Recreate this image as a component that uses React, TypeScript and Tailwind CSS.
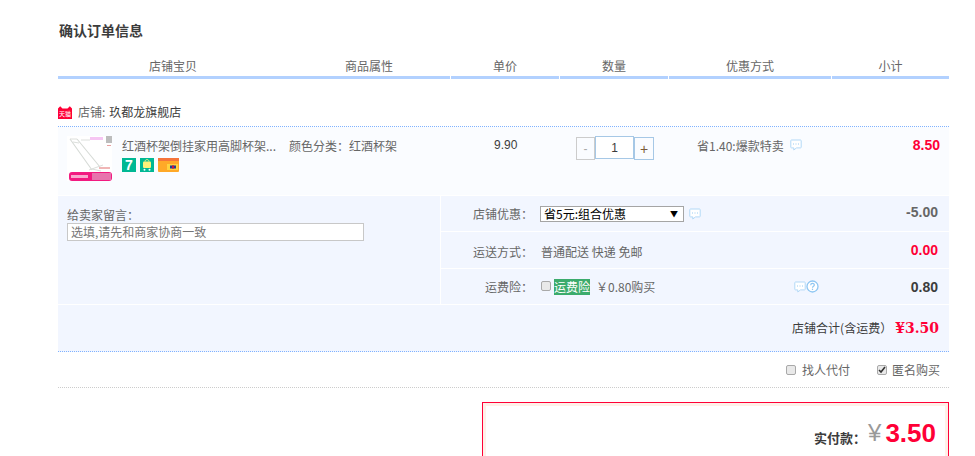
import React from "react";

const Bubble = () => (
  <svg width="12" height="12" viewBox="0 0 12 12" className="shrink-0">
    <path d="M1.500 1h9a.7.7 0 0 1 .7.7v6.500a.7.7 0 0 1-.7.7H6.500L3.800 11V8.900H1.500a.7.7 0 0 1-.7-.7V1.700a.7.7 0 0 1 .7-.7z" fill="#fff" stroke="#b3d9f7" strokeWidth="1" />
    <path d="M3 5h1M5.500 5h1M8 5h1" stroke="#9accf2" strokeWidth="1" />
  </svg>
);

const Help = () => (
  <svg width="13" height="13" viewBox="0 0 13 13" className="shrink-0">
    <circle cx="6.500" cy="6.500" r="5.500" fill="#fff" stroke="#8ec6f2" strokeWidth="1.300" />
    <path d="M4.700 5.200c0-2.300 3.600-2.300 3.600-.2 0 1.300-1.800 1.400-1.800 2.800" fill="none" stroke="#8ec6f2" strokeWidth="1.200" />
    <rect x="5.900" y="8.700" width="1.200" height="1.300" fill="#8ec6f2" />
  </svg>
);

const Tmall = () => (
  <svg width="14" height="13" viewBox="0 0 14 13">
    <path d="M0 2.500 2.200 0.200 4.500 2.500h5L11.800 0.200 14 2.500V13H0z" fill="#ff0036" />
    <text x="7" y="9.800" textAnchor="middle" fontSize="6" fill="#fff" fontFamily="'Noto Sans CJK SC', sans-serif">天猫</text>
  </svg>
);

const Product = () => (
  <svg width="45" height="45" viewBox="0 0 45 45" className="shrink-0">
    <rect width="45" height="45" fill="#fff" />
    <path d="M3 3 25 34M10 3 33 31" stroke="#d6dad6" strokeWidth="1.100" fill="none" />
    <path d="M3 3l7 0M6 6l6 1M22 34l14-5M25 33l9 2M14 4h9" stroke="#dcdfdc" strokeWidth="1" fill="none" />
    <rect x="23" y="1" width="13" height="3" fill="#f6c6f3" />
    <rect x="39" y="0" width="6" height="7" fill="#bdbdbd" />
    <rect x="40" y="9" width="4" height="1" fill="#e8a0a0" />
    <rect x="32" y="31" width="11" height="2" fill="#f0b6b6" />
    <rect x="2" y="36" width="43" height="9" rx="3" fill="#f21a80" />
    <rect x="25" y="37" width="19" height="7" fill="#e774ad" />
    <rect x="4" y="39" width="17" height="3" fill="#f9a9cf" />
  </svg>
);

const Seven = () => (
  <span className="flex h-[14px] w-[14px] items-center justify-center bg-[#00b894] text-[14px] font-bold leading-none text-white [font-family:'Liberation_Sans',sans-serif]">7</span>
);

const Bag = () => (
  <svg width="14" height="14" viewBox="0 0 14 14">
    <rect width="14" height="14" fill="#00b894" />
    <rect x="3" y="3.500" width="8" height="6.500" rx="1" fill="#fff27a" />
    <path d="M5 3.500c0-2.500 4-2.500 4 0" stroke="#fff27a" fill="none" />
    <circle cx="4.500" cy="11.800" r="1" fill="#fff" />
    <circle cx="9.500" cy="11.800" r="1" fill="#fff" />
  </svg>
);

const Card = () => (
  <svg width="21" height="14" viewBox="0 0 21 14">
    <rect width="21" height="14" rx="1" fill="#ffa928" />
    <rect width="21" height="3" fill="#f5743a" />
    <rect x="9" y="6" width="11" height="6" fill="#ffd23f" />
    <rect x="12" y="7.500" width="6" height="3" fill="#1c3f94" />
    <rect x="14" y="7.500" width="2" height="3" fill="#d0103a" />
  </svg>
);

function FakeCheck({ checked }: { checked?: boolean }) {
  return (
    <span className="flex h-[10px] w-[10px] items-center justify-center rounded-[2px] border border-[#a9a9a9] bg-[#e9e9e9]">
      {checked ? (
        <svg width="8" height="8" viewBox="0 0 8 8">
          <path d="M1 4l2 2 4-5" fill="none" stroke="#333" strokeWidth="1.600" />
        </svg>
      ) : null}
    </span>
  );
}

function HeadCell({ label, className }: { label: string; className: string }) {
  return (
    <div className={`flex h-[22px] items-start justify-center border-b-[3px] border-[#b2d1ff] pt-[1px] ${className}`}>
      {label}
    </div>
  );
}

export default function App() {
  return (
    <div className="h-[456px] w-[975px] overflow-hidden bg-white pl-[58px] text-[12px] leading-[16px] text-[#666] [font-family:'Noto_Sans_CJK_SC','Liberation_Sans',sans-serif]">
      <div className="w-[891px]">
        <div className="flex h-[57px] items-start pl-[1px] pt-[22px] text-[14px] font-bold leading-[16px] text-[#3c3c3c]">确认订单信息</div>

        <div className="flex gap-[1px]">
          <HeadCell label="店铺宝贝" className="w-[230px]" />
          <HeadCell label="商品属性" className="w-[162px] -ml-[1px]" />
          <HeadCell label="单价" className="w-[108px]" />
          <HeadCell label="数量" className="w-[108px]" />
          <HeadCell label="优惠方式" className="w-[162px]" />
          <HeadCell label="小计" className="flex-1" />
        </div>

        <div className="flex h-[48px] items-end gap-[6px] border-b border-dotted border-[#80b2ff] pb-[6px] text-[#3c3c3c]">
          <span className="mb-[1px]"><Tmall /></span>
          <span><span className="text-[#666]">店铺:</span><span className="ml-[4px]">玖都龙旗舰店</span></span>
        </div>

        <div className="flex h-[68px] bg-[#fafcff]">
          <div className="ml-[9px] mt-[9px]"><Product /></div>
          <div className="ml-[10px] mt-[11px] w-[167px]">
            <div className="whitespace-nowrap">红酒杯架倒挂家用高脚杯架...</div>
            <div className="mt-[4px] flex gap-[4px]">
              <Seven />
              <Bag />
              <Card />
            </div>
          </div>
          <div className="mt-[11px] w-[202px] whitespace-nowrap">颜色分类：红酒杯架</div>
          <div className="mt-[10px] w-[85px] pl-[3px] text-[#3c3c3c] [font-family:'Liberation_Sans',sans-serif]">9.90</div>
          <div className="mt-[9px] flex h-[24px] w-[121px] items-start [font-family:'Liberation_Sans',sans-serif]">
            <span className="mt-[1px] flex h-[23px] w-[19px] items-center justify-center border border-[#ccc] text-[#aaa]">-</span>
            <span className="flex h-[23px] w-[39px] items-center justify-center border border-[#a6c8e6] bg-white text-[#3c3c3c]">1</span>
            <span className="mt-[1px] flex h-[23px] w-[20px] items-center justify-center border border-[#a6c8e6] text-[14px] text-[#7a5a3a]">+</span>
          </div>
          <div className="mt-[11px] flex w-[110px] items-start gap-[6px] whitespace-nowrap">
            省1.40:爆款特卖
            <span className="mt-[1px]"><Bubble /></span>
          </div>
          <div className="mt-[10px] flex-1 pr-[9px] text-right text-[14px] font-bold text-[#ff0036] [font-family:'Liberation_Sans',sans-serif]">8.50</div>
        </div>

        <div className="flex h-[110px] border-y border-white bg-[#f2f6ff]">
          <div className="w-[382px] pl-[9px] pt-[11px]">
            <div>给卖家留言：</div>
            <div className="flex h-[18px] w-[297px] items-center border border-[#c8c8c8] bg-white pl-[3px] text-[#757575]">选填,请先和商家协商一致</div>
          </div>
          <div className="flex flex-1 flex-col border-l border-white">
            <div className="flex h-[36px] items-center border-b border-white">
              <span className="w-[92px] text-right">店铺优惠：</span>
              <span className="ml-[7px] flex h-[16px] w-[144px] items-center justify-between border border-[#a5a5a5] bg-white pl-[3px] pr-[5px] text-[#000]">省5元:组合优惠<span className="text-[8px]">▼</span></span>
              <span className="ml-[5px]"><Bubble /></span>
              <span className="ml-auto pb-[3px] pr-[11px] text-[14px] font-bold text-[#666] [font-family:'Liberation_Sans',sans-serif]">-5.00</span>
            </div>
            <div className="flex h-[37px] items-center border-b border-white">
              <span className="w-[92px] pt-[3px] text-right">运送方式：</span>
              <span className="ml-[8px] pt-[3px]">普通配送 快递 免邮</span>
              <span className="ml-auto pr-[11px] text-[14px] font-bold text-[#ff0036] [font-family:'Liberation_Sans',sans-serif]">0.00</span>
            </div>
            <div className="flex flex-1 items-center">
              <span className="w-[92px] text-right">运费险：</span>
              <span className="mb-[2px] ml-[8px]"><FakeCheck /></span>
              <span className="ml-[3px] bg-[#3cab6c] text-white">运费险</span>
              <span className="ml-[6px] w-[198px]">￥0.80购买</span>
              <span className="flex items-center"><Bubble /><Help /></span>
              <span className="ml-auto pr-[11px] text-[14px] font-bold text-[#3c3c3c] [font-family:'Liberation_Sans',sans-serif]">0.80</span>
            </div>
          </div>
        </div>

        <div className="flex h-[47px] items-center justify-end gap-[3px] border-b border-dotted border-[#80b2ff] bg-[#f2f6ff] pr-[10px] text-[#3c3c3c]">
          <span>店铺合计(含运费）</span>
          <span className="text-[14px] font-bold text-[#ff0036] [font-family:'DejaVu_Serif',serif]">¥3.50</span>
        </div>

        <div className="flex h-[36px] items-center justify-end border-b border-dotted border-[#ccc] pr-[9px]">
          <FakeCheck />
          <span className="ml-[6px]">找人代付</span>
          <span className="ml-[27px]"><FakeCheck checked /></span>
          <span className="ml-[5px]">匿名购买</span>
        </div>

        <div className="ml-[424px] mt-[14px] h-[120px] border border-[#ff0036]">
          <div className="h-full border-[3px] border-[#fff0e8] pr-[9px] pt-[13px]">
            <div className="flex items-end justify-end">
              <span className="mb-[1px] mr-[2px] text-[13px] font-bold text-[#3c3c3c]">实付款：</span>
              <span className="text-[24px] leading-[28px] text-[#999] [font-family:'Liberation_Sans',sans-serif]">¥</span>
              <span className="ml-[4px] text-[26px] font-bold leading-[28px] text-[#ff0036] [font-family:'Liberation_Sans',sans-serif]">3.50</span>
            </div>
          </div>
        </div>
      </div>
    </div>
  );
}
